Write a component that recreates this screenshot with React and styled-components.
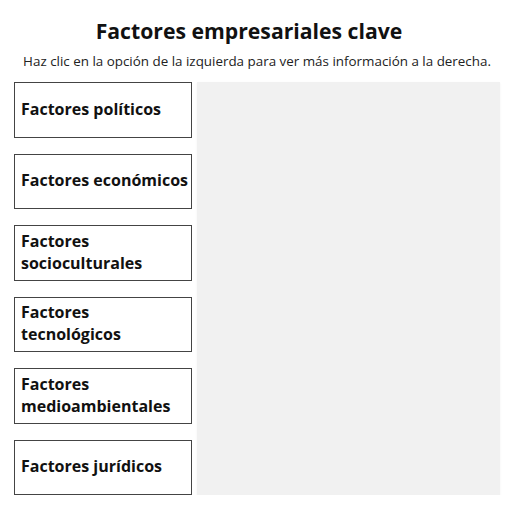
import React from "react";
import styled, { createGlobalStyle } from "styled-components";

const GlobalStyle = createGlobalStyle`
  body {
    margin: 0;
    background: #fff;
    font-family: "Open Sans", "Noto Sans", sans-serif;
    color: #111;
  }
`;

const Page = styled.div`
  width: 486px;
  padding: 17px 15px 0 14px;
`;

const Title = styled.h1`
  margin: 0;
  padding-right: 16px;
  font-size: 21.2px;
  font-weight: 700;
  line-height: 28px;
  text-align: center;
`;

const Subtitle = styled.p`
  margin: 7px 0 0;
  font-size: 13.4px;
  line-height: 18px;
  text-align: center;
  color: #222;
`;

const Body = styled.div`
  display: grid;
  grid-template-columns: 178px 1fr;
  gap: 5px;
  margin-top: 12px;
`;

const Options = styled.div`
  display: flex;
  flex-direction: column;
  gap: 16px;
`;

const Option = styled.button`
  display: flex;
  align-items: center;
  box-sizing: border-box;
  height: 55.5px;
  padding: 0 0 2px 6px;
  border: 1px solid #444;
  background: #fff;
  font-family: inherit;
  font-size: 16px;
  font-weight: 700;
  line-height: 22px;
  color: #111;
  text-align: left;
  white-space: normal;
  cursor: pointer;
`;

const Panel = styled.div`
  background: #f1f1f1;
  box-shadow: 0 1px 2px rgba(0, 0, 0, 0.06);
`;

const factors = [
  "Factores políticos",
  "Factores económicos",
  "Factores socioculturales",
  "Factores tecnológicos",
  "Factores medioambientales",
  "Factores jurídicos",
];

export default function App() {
  return (
    <>
      <GlobalStyle />
      <Page>
        <Title>Factores empresariales clave</Title>
        <Subtitle>
          Haz clic en la opción de la izquierda para ver más información a la derecha.
        </Subtitle>
        <Body>
          <Options>
            {factors.map((f) => (
              <Option key={f}>{f}</Option>
            ))}
          </Options>
          <Panel />
        </Body>
      </Page>
    </>
  );
}
